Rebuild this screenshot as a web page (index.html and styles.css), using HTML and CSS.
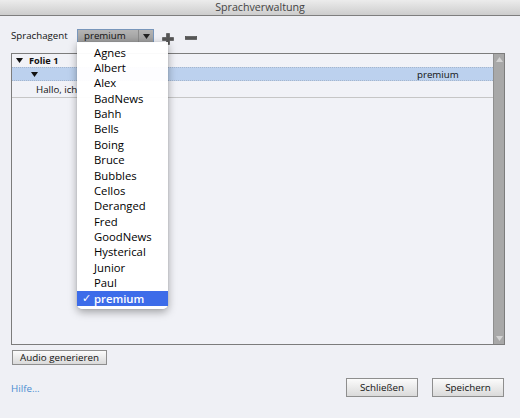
FILE: index.html
```html
<!DOCTYPE html>
<html lang="de">
<head>
<meta charset="utf-8">
<title>Sprachverwaltung</title>
<link rel="stylesheet" href="styles.css">
</head>
<body>
<div class="window">
  <div class="titlebar">Sprachverwaltung</div>
  <div class="content">
    <div class="toolbar">
      <span class="label">Sprachagent</span>
      <div class="select">
        <span class="select-value">premium</span>
        <span class="select-arrow"><svg width="7" height="5" viewBox="0 0 7 5"><path d="M0 0H7L3.5 5Z" fill="#222"/></svg></span>
        <ul class="menu">
          <li>Agnes</li>
          <li>Albert</li>
          <li>Alex</li>
          <li>BadNews</li>
          <li>Bahh</li>
          <li>Bells</li>
          <li>Boing</li>
          <li>Bruce</li>
          <li>Bubbles</li>
          <li>Cellos</li>
          <li>Deranged</li>
          <li>Fred</li>
          <li>GoodNews</li>
          <li>Hysterical</li>
          <li>Junior</li>
          <li>Paul</li>
          <li class="selected"><span class="check">✓</span>premium</li>
        </ul>
      </div>
      <span class="icon-plus"><svg width="12" height="12" viewBox="0 0 12 12"><path d="M4.5 0.5H7.5V4.5H11.5V7.5H7.5V11.5H4.5V7.5H0.5V4.5H4.5Z" fill="#555" stroke="#444" stroke-width="0.6"/></svg></span>
      <span class="icon-minus"><svg width="12" height="4" viewBox="0 0 12 4"><rect x="0.3" y="0.5" width="11.4" height="3" fill="#555" stroke="#444" stroke-width="0.6"/></svg></span>
    </div>

    <div class="panel">
      <div class="list">
        <div class="row row-folie">
          <svg class="tri" width="7" height="5" viewBox="0 0 7 5"><path d="M0 0H7L3.5 5Z" fill="#111"/></svg>
          <span class="bold">Folie 1</span>
        </div>
        <div class="row row-sel">
          <svg class="tri tri-indent" width="7" height="5" viewBox="0 0 7 5"><path d="M0 0H7L3.5 5Z" fill="#111"/></svg>
          <span class="voice">premium</span>
        </div>
        <div class="row row-text">Hallo, ich</div>
      </div>
      <div class="scrollbar">
        <svg width="7" height="5" viewBox="0 0 7 5"><path d="M0 5H7L3.5 0Z" fill="#d2d2d2"/></svg>
        <svg width="7" height="5" viewBox="0 0 7 5"><path d="M0 0H7L3.5 5Z" fill="#d2d2d2"/></svg>
      </div>
    </div>

    <button class="btn btn-small">Audio generieren</button>

    <div class="footer">
      <a class="help" href="#">Hilfe...</a>
      <div class="actions">
        <button class="btn btn-big">Schließen</button>
        <button class="btn btn-big">Speichern</button>
      </div>
    </div>
  </div>
</div>
</body>
</html>
```

FILE: styles.css
```css
* { box-sizing: border-box; }

html, body {
  margin: 0;
  padding: 0;
}

body {
  width: 520px;
  height: 418px;
  overflow: hidden;
  background: #eff0f5;
  font-family: "Open Sans", "DejaVu Sans", sans-serif;
  font-size: 9.7px;
  color: #111;
}

.window {
  width: 520px;
  height: 418px;
}

.titlebar {
  height: 16px;
  line-height: 15px;
  text-align: center;
  font-size: 10.7px;
  color: #444;
  background: linear-gradient(#ececec, #cdcdcd);
  border-bottom: 1px solid #7e7e7e;
}

.content {
  padding: 0 15px 0 11px;
}

.toolbar {
  margin-top: 13px;
  height: 14px;
  display: flex;
  align-items: center;
}

.label {
  width: 66px;
  line-height: 14px;
  font-weight: 500;
}

.select {
  position: relative;
  width: 77px;
  height: 14px;
  display: flex;
  border: 1px solid #7896bb;
  background: linear-gradient(#b4b4b4, #9c9c9c);
}

.select-value {
  flex: 1;
  padding-left: 6px;
  line-height: 12px;
  color: #111;
  font-weight: 500;
}

.select-arrow {
  width: 15px;
  border-left: 1px solid #8a8a8a;
  display: flex;
  align-items: center;
  justify-content: center;
}

.menu {
  position: absolute;
  top: 12px;
  left: -1px;
  width: 91px;
  margin: 0;
  padding: 2.5px 0 3px;
  list-style: none;
  background: rgba(255, 255, 255, 0.96);
  border-radius: 0 0 5px 5px;
  box-shadow: 0 3px 9px rgba(0, 0, 0, 0.35), 0 0 1px rgba(0, 0, 0, 0.3);
  z-index: 10;
}

.menu li {
  position: relative;
  height: 15.375px;
  line-height: 15.375px;
  padding-left: 17px;
  font-size: 11.3px;
  font-weight: 500;
  color: #000;
  white-space: nowrap;
}

.menu li.selected {
  background: #3d6ce9;
  color: #fff;
  font-weight: 600;
}

.check {
  position: absolute;
  left: 5px;
  top: 0;
  font-size: 11px;
  font-family: "DejaVu Sans", sans-serif;
  font-weight: 700;
}

.icon-plus {
  margin-left: 8px;
  display: flex;
  margin-top: 5px;
}

.icon-minus {
  margin-left: 11px;
  display: flex;
  margin-top: 4px;
}

.panel {
  margin-top: 10px;
  height: 292px;
  display: flex;
  border: 1px solid #7c7c7c;
  background: #f1f2f7;
}

.list {
  flex: 1;
}

.row {
  display: flex;
  align-items: center;
  white-space: nowrap;
  font-weight: 500;
}

.row-folie {
  height: 13px;
  padding-left: 4px;
}

.row-folie .tri {
  margin-right: 6px;
}

.bold {
  font-weight: 700;
  font-size: 9.2px;
}

.row-sel {
  height: 14px;
  background: #bcd1ee;
  border-top: 1px dotted #a6b6cc;
  border-bottom: 1px dotted #a6b6cc;
}

.tri-indent {
  margin-left: 19px;
}

.voice {
  margin-left: auto;
  width: 76px;
}

.row-text {
  height: 17px;
  padding-left: 24px;
  border-bottom: 1px solid #c6c6c6;
}

.scrollbar {
  width: 11px;
  background: #a8a8a8;
  border-left: 1px solid #8f8f8f;
  display: flex;
  flex-direction: column;
  justify-content: space-between;
  align-items: center;
  padding: 3px 0 3px;
}

.btn {
  font-family: "Open Sans", "DejaVu Sans", sans-serif;
  font-size: 9.8px;
  font-weight: 500;
  color: #111;
  background: linear-gradient(#fbfbfb, #dadada);
  border: 1px solid #8e8e8e;
  padding: 0;
  margin: 0;
}

.btn-small {
  display: block;
  margin-top: 5px;
  margin-left: 1px;
  width: 95px;
  height: 15px;
  line-height: 12px;
}

.footer {
  margin-top: 13px;
  height: 19px;
  display: flex;
  align-items: center;
  justify-content: space-between;
}

.help {
  color: #4a8dd2;
  text-decoration: none;
  font-size: 9.8px;
  margin-top: 1px;
}

.actions {
  display: flex;
  gap: 14px;
  margin-right: 1px;
}

.btn-big {
  width: 72px;
  height: 19px;
}
```
